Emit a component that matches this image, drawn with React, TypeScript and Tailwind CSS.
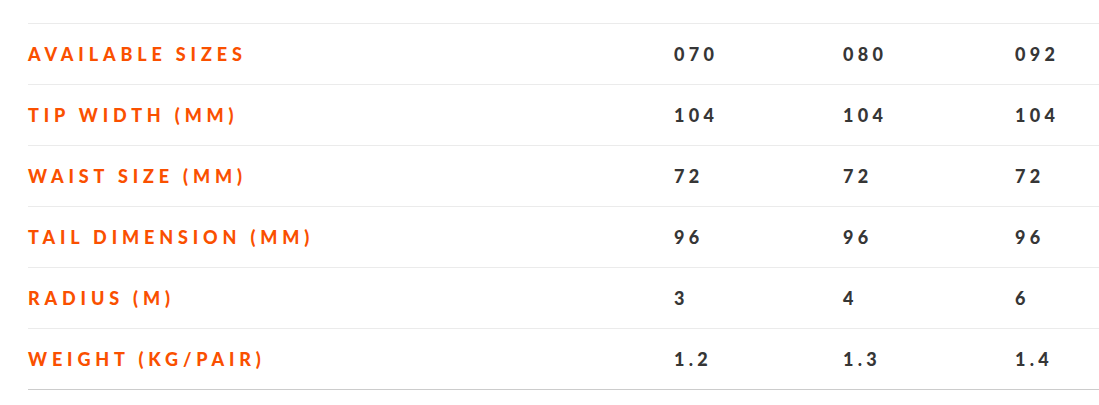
const rows: [string, string, string, string][] = [
  ["Available Sizes", "070", "080", "092"],
  ["Tip Width (mm)", "104", "104", "104"],
  ["Waist Size (mm)", "72", "72", "72"],
  ["Tail Dimension (mm)", "96", "96", "96"],
  ["Radius (m)", "3", "4", "6"],
  ["Weight (kg/pair)", "1.2", "1.3", "1.4"],
];

export default function App() {
  return (
    <div className="w-[1099px] h-[405px] bg-white pt-[23px] pl-[28px] font-['Lato',sans-serif] overflow-hidden">
      <div className="border-b border-[#cccccc]">
        {rows.map((r) => (
          <div
            key={r[0]}
            className="grid grid-cols-[646px_169px_172px_1fr] items-center h-[61px] border-t border-[#ebebeb]"
          >
            <div className="uppercase font-black text-[18px] tracking-[0.27em] text-[#fa5000]">
              {r[0]}
            </div>
            {r.slice(1).map((v, i) => (
              <div
                key={i}
                className="font-black text-[18px] tracking-[0.24em] text-[#363636]"
              >
                {v}
              </div>
            ))}
          </div>
        ))}
      </div>
    </div>
  );
}
